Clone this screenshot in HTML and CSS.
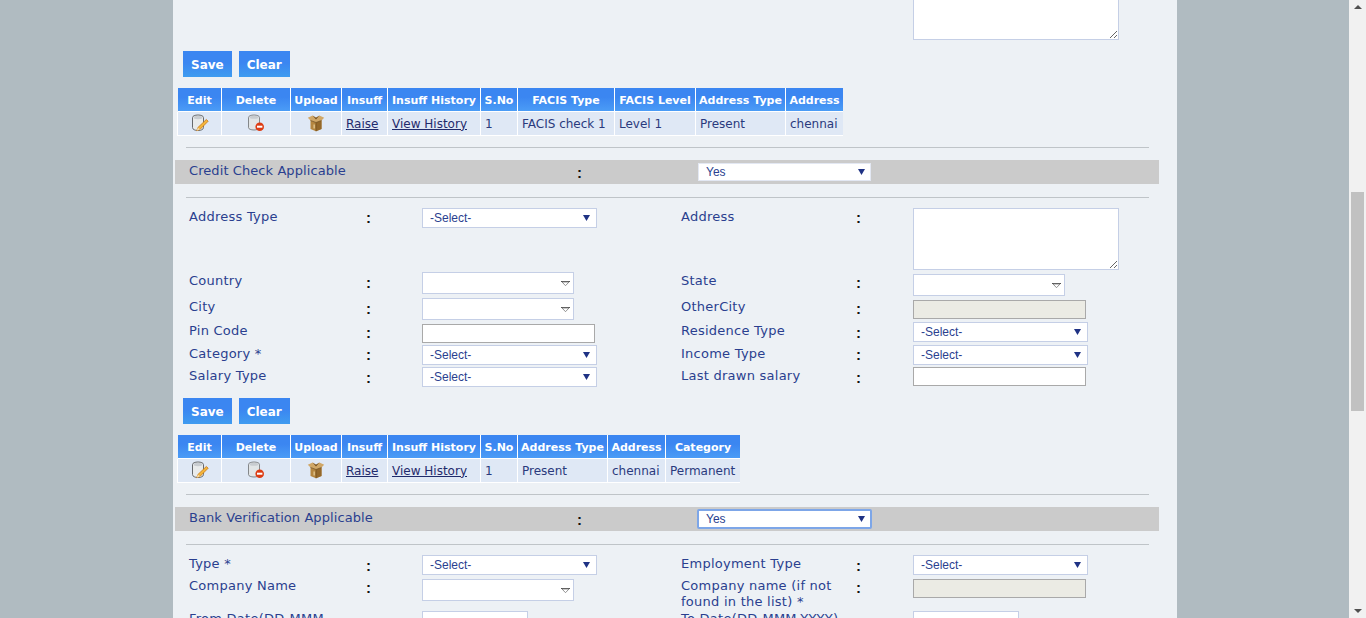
FILE: index.html
```html
<!DOCTYPE html>
<html lang="en">
<head>
<meta charset="utf-8">
<title>Verification details</title>
<link rel="stylesheet" href="styles.css">
</head>
<body>
<svg class="defs" aria-hidden="true">
  <symbol id="i-edit" viewBox="0 0 18 18">
    <path d="M1.500 3.500C1.500 2 4 1 7 1s5.500 1 5.500 2.500v10C12.500 15.500 10 16.500 7 16.500s-5.500-1-5.500-3z" fill="#e9ebeb" stroke="#66696c" stroke-width="1"/>
    <ellipse cx="7" cy="3.500" rx="4.500" ry="1.700" fill="#c8ccd0"/>
    <path d="M15.300 5.500l1.900 1.700-8.200 8.200-3.300 1.300 1.200-3.200z" fill="#f4b63a" stroke="#c9791a" stroke-width=".8"/>
    <path d="M6.900 13.500l2.100 1.900-3.300 1.300z" fill="#f1dcae"/>
  </symbol>
  <symbol id="i-delete" viewBox="0 0 18 18">
    <path d="M1.500 3.300C1.500 2 4 1 7 1s5.500 1 5.500 2.300v10.400c0 1.300-2.500 2.300-5.500 2.300s-5.500-1-5.500-2.300z" fill="#e2e5e6" stroke="#84878a" stroke-width="1"/>
    <ellipse cx="7" cy="3.300" rx="4.500" ry="1.500" fill="#c8ccd0"/>
    <circle cx="12.700" cy="12.700" r="4.300" fill="#dd3b12"/>
    <rect x="10" y="11.700" width="5.400" height="2" fill="#fff"/>
  </symbol>
  <symbol id="i-box" viewBox="0 0 18 18">
    <path d="M3.500 6.500L9 8.500l5.500-2v8.500L9 17.200 3.500 15z" fill="#b5863f"/>
    <path d="M9 8.500v8.700l5.500-2.200V6.500z" fill="#94682a"/>
    <path d="M3.500 6.500L.8 3.700 5.600 1.600 9 3.700l3.400-2.100 4.800 2.100-2.700 2.800L9 8.500z" fill="#d0a767"/>
    <path d="M5.600 1.600L9 3.700l3.400-2.100L9 5.400z" fill="#6f4c1d"/>
    <path d="M3.500 6.500L9 8.500l5.500-2M9 8.500v8.700" fill="none" stroke="#74511f" stroke-width=".8"/>
    <rect x="6.500" y="10.500" width="1.300" height="4" fill="#e3c792"/>
  </symbol>
</svg>

<div class="page">
  <main class="sheet">
    <div class="form-row clip-row">
      <textarea class="field area col-last"></textarea>
    </div>

    <div class="actions">
      <button class="btn" type="button">Save</button>
      <button class="btn" type="button">Clear</button>
    </div>

    <table class="grid">
      <thead>
        <tr>
          <th class="c-edit">Edit</th><th class="c-del">Delete</th><th class="c-up">Upload</th><th class="c-ins">Insuff</th><th class="c-hist">Insuff History</th><th class="c-sno">S.No</th><th class="c-ftype">FACIS Type</th><th class="c-flevel">FACIS Level</th><th class="c-atype">Address Type</th><th class="c-addr">Address</th>
        </tr>
      </thead>
      <tbody>
        <tr>
          <td class="icon"><svg class="ico"><use href="#i-edit"/></svg></td>
          <td class="icon"><svg class="ico"><use href="#i-delete"/></svg></td>
          <td class="icon"><svg class="ico"><use href="#i-box"/></svg></td>
          <td><a href="#">Raise</a></td>
          <td><a href="#">View History</a></td>
          <td>1</td><td>FACIS check 1</td><td>Level 1</td><td>Present</td><td>chennai</td>
        </tr>
      </tbody>
    </table>

    <hr class="rule rule-a">
    <div class="bar">
      <span class="bar-label">Credit Check Applicable</span>
      <span class="colon">:</span>
      <select class="field bar-select"><option>Yes</option></select>
    </div>
    <hr class="rule rule-b">

    <div class="form-row h64">
      <label class="lbl">Address Type</label><span class="colon">:</span>
      <select class="field sel"><option>-Select-</option></select>
      <label class="lbl">Address</label><span class="colon">:</span>
      <textarea class="field area"></textarea>
    </div>
    <div class="form-row h26">
      <label class="lbl">Country</label><span class="colon">:</span>
      <select class="field combo"></select>
      <label class="lbl">State</label><span class="colon">:</span>
      <select class="field combo nudge-down"></select>
    </div>
    <div class="form-row h26">
      <label class="lbl">City</label><span class="colon">:</span>
      <select class="field combo"></select>
      <label class="lbl">OtherCity</label><span class="colon">:</span>
      <input class="txt nudge-down" type="text" disabled>
    </div>
    <div class="form-row h21 tight">
      <label class="lbl">Pin Code</label><span class="colon">:</span>
      <input class="txt" type="text">
      <label class="lbl">Residence Type</label><span class="colon">:</span>
      <select class="field sel nudge-up"><option>-Select-</option></select>
    </div>
    <div class="form-row h22 snug">
      <label class="lbl">Category *</label><span class="colon">:</span>
      <select class="field sel"><option>-Select-</option></select>
      <label class="lbl">Income Type</label><span class="colon">:</span>
      <select class="field sel"><option>-Select-</option></select>
    </div>
    <div class="form-row h22">
      <label class="lbl">Salary Type</label><span class="colon">:</span>
      <select class="field sel"><option>-Select-</option></select>
      <label class="lbl">Last drawn salary</label><span class="colon">:</span>
      <input class="txt" type="text">
    </div>

    <div class="actions after-form">
      <button class="btn" type="button">Save</button>
      <button class="btn" type="button">Clear</button>
    </div>

    <table class="grid">
      <thead>
        <tr>
          <th class="c-edit">Edit</th><th class="c-del">Delete</th><th class="c-up">Upload</th><th class="c-ins">Insuff</th><th class="c-hist">Insuff History</th><th class="c-sno">S.No</th><th class="c-atype2">Address Type</th><th class="c-addr2">Address</th><th class="c-cat">Category</th>
        </tr>
      </thead>
      <tbody>
        <tr>
          <td class="icon"><svg class="ico"><use href="#i-edit"/></svg></td>
          <td class="icon"><svg class="ico"><use href="#i-delete"/></svg></td>
          <td class="icon"><svg class="ico"><use href="#i-box"/></svg></td>
          <td><a href="#">Raise</a></td>
          <td><a href="#">View History</a></td>
          <td>1</td><td>Present</td><td>chennai</td><td>Permanent</td>
        </tr>
      </tbody>
    </table>

    <hr class="rule rule-a">
    <div class="bar">
      <span class="bar-label">Bank Verification Applicable</span>
      <span class="colon">:</span>
      <select class="field bar-select is-focus"><option>Yes</option></select>
    </div>
    <hr class="rule rule-b">

    <div class="form-row h24">
      <label class="lbl">Type *</label><span class="colon">:</span>
      <select class="field sel"><option>-Select-</option></select>
      <label class="lbl">Employment Type</label><span class="colon">:</span>
      <select class="field sel"><option>-Select-</option></select>
    </div>
    <div class="form-row h32 tight">
      <label class="lbl">Company Name</label><span class="colon">:</span>
      <select class="field combo"></select>
      <label class="lbl">Company name (if not found in the list) *</label><span class="colon">:</span>
      <input class="txt" type="text" disabled>
    </div>
    <div class="form-row h26 flush">
      <label class="lbl">From Date(DD-MMM-YYYY)</label><span class="colon">:</span>
      <input class="field date" type="text">
      <label class="lbl">To Date(DD-MMM-YYYY)</label><span class="colon">:</span>
      <input class="field date" type="text">
    </div>
  </main>

  <div class="backdrop"></div>

  <div class="scrollbar" aria-hidden="true">
    <span class="sb-arrow sb-up"></span>
    <span class="sb-thumb"></span>
    <span class="sb-arrow sb-down"></span>
  </div>
</div>
</body>
</html>
```

FILE: styles.css
```css
* { box-sizing: border-box; }

html, body {
  margin: 0;
  height: 618px;
  overflow: hidden;
  background: #b0bbc1;
}

.defs { display: none; }

.page {
  display: flex;
  height: 618px;
  overflow: hidden;
  padding-left: 173px;
  font-family: "DejaVu Sans", Verdana, sans-serif;
}

.sheet {
  flex: none;
  width: 1004px;
  height: 618px;
  overflow: hidden;
  background: #edf1f5;
}

.backdrop { flex: 1; }

/* form rows */
.form-row {
  display: grid;
  grid-template-columns: 177px 56px 259px 175px 57px 1fr;
  padding-left: 16px;
  align-items: start;
}

.clip-row {
  height: 40px;
  grid-template-rows: 40px;
  overflow: hidden;
  align-items: end;
}

.col-last { grid-column: 6; }

.h64 { height: 64px; }
.h26 { height: 26px; }
.h21 { height: 21px; }
.h22 { height: 22px; }
.h24 { height: 24px; }
.h32 { height: 32px; }

.lbl {
  padding: 1px 10px 0 0;
  font-size: 13px;
  line-height: 15.500px;
  letter-spacing: .25px;
  color: #2a3f8f;
}

.flush .lbl { padding-top: 0; }
.tight .lbl { padding-top: 0; margin-top: -1px; }

.colon {
  margin-top: 1px;
  font-family: "Liberation Sans", Arial, sans-serif;
  font-size: 15px;
  line-height: 20px;
  font-weight: 700;
  color: #111;
}

.h64 .colon, .snug .colon, .flush .colon { margin-top: 0; }
.tight .colon { margin-top: -1px; }

.nudge-down { margin-top: 2px !important; }
.nudge-up { margin-top: -2px !important; }

.field {
  display: block;
  margin: 0;
  border: 1px solid #c5cfe6;
  border-radius: 0;
  background-color: #fff;
  outline: none;
}

select.field {
  appearance: none;
  -webkit-appearance: none;
  font-family: "Liberation Sans", Arial, sans-serif;
  font-size: 12px;
  color: #2a3f8f;
  padding: 0 0 0 7px;
  background-repeat: no-repeat;
}

.sel, .bar-select {
  background-image: url("data:image/svg+xml,%3Csvg xmlns='http://www.w3.org/2000/svg' width='7' height='6'%3E%3Cpath d='M0 0h7L3.500 6z' fill='%231f3284'/%3E%3C/svg%3E");
  background-position: right 6px center;
}

.bar-select { background-position: right 5px center; }

.sel { width: 175px; height: 20px; }

.combo {
  width: 152px;
  height: 22px;
  background-image: url("data:image/svg+xml,%3Csvg xmlns='http://www.w3.org/2000/svg' width='9' height='5'%3E%3Cpath d='M0 0h9v1H0z' fill='%23555'/%3E%3Cpath d='M1 1h7L4.500 4.700z' fill='%23fff' stroke='%23777' stroke-width='.8'/%3E%3C/svg%3E");
  background-position: right 3px center;
}

.area {
  width: 206px;
  height: 62px;
  resize: both;
}

.txt {
  display: block;
  width: 173px;
  height: 19px;
  margin: 0;
  padding: 0 2px;
  border: 1px solid #a9a9a9;
  border-radius: 0;
  background: #fff;
  outline: none;
}

.txt:disabled { background: #ebebe4; }

.date { width: 106px; height: 22px; padding: 0 2px; }

/* buttons */
.actions {
  display: flex;
  gap: 7px;
  padding-left: 10px;
  margin-top: 11px;
}

.after-form { margin-top: 9px; }

.btn {
  height: 26px;
  padding: 1px 8px 0;
  border: 0;
  border-radius: 0;
  background: linear-gradient(#3b86f1 0, #3b86f1 45%, #3f9cf0 100%);
  color: #fff;
  font-family: "DejaVu Sans", Verdana, sans-serif;
  font-size: 12px;
  font-weight: 700;
}

/* result tables */
.grid {
  margin: 11px 0 0 5px;
  border-collapse: separate;
  border-spacing: 0;
  table-layout: fixed;
  width: max-content;
}

.grid th {
  height: 24px;
  padding: 1px 0 0;
  border-right: 1px solid #fff;
  border-bottom: 1px solid #fff;
  background: linear-gradient(#3b86f1 0, #3b86f1 40%, #4b9cf6 100%);
  color: #fff;
  font-size: 11px;
  font-weight: 700;
  text-align: center;
  white-space: nowrap;
}

.grid td {
  height: 24px;
  padding: 0 0 0 4px;
  border-right: 1px solid #fff;
  border-bottom: 1px solid #fff;
  background: #dfe8f5;
  color: #2a3a7d;
  font-size: 12px;
  white-space: nowrap;
}

.grid td:first-child { box-shadow: -1px 0 0 #fff; }
.grid td:last-child, .grid th:last-child { border-right: 0; }

.grid a { color: #1f2a6b; }

.grid .icon { padding: 0; text-align: center; }

.ico { display: block; width: 18px; height: 18px; margin: 0 auto 1px; }

.c-edit { width: 44px; }
.c-del { width: 69px; }
.c-up { width: 51px; }
.c-ins { width: 46px; }
.c-hist { width: 93px; }
.c-sno { width: 37px; }
.c-ftype { width: 97px; }
.c-flevel { width: 81px; }
.c-atype { width: 90px; }
.c-addr { width: 57px; }
.c-atype2 { width: 90px; }
.c-addr2 { width: 58px; }
.c-cat { width: 74px; }

/* section bars */
.rule {
  display: block;
  width: 963px;
  height: 1px;
  margin: 0 0 0 13px;
  border: 0;
  background: #bfc4c8;
}

.rule-a { margin-top: 11px; }
.rule-b { margin-top: 13px; margin-bottom: 10px; }

.bar {
  display: grid;
  grid-template-columns: 388px 120px 175px;
  align-items: start;
  width: 984px;
  height: 24px;
  margin: 12px 0 0 2px;
  padding-left: 14px;
  background: #cbcbcb;
}

.bar-label {
  padding-top: 1px;
  font-size: 13px;
  line-height: 20px;
  letter-spacing: .08px;
  color: #2a3f8f;
}

.bar .colon { padding-top: 2px; }

select.bar-select {
  width: 173px;
  height: 18px;
  margin: 3px 0 0 1px;
  border-color: #e3e8f3;
}

select.is-focus {
  width: 175px;
  height: 20px;
  margin: 2px 0 0;
  padding-left: 7px;
  border: 2px solid #7da6e8;
  border-radius: 2px;
}

/* window scrollbar */
.scrollbar {
  flex: none;
  display: flex;
  flex-direction: column;
  align-items: center;
  width: 17px;
  height: 618px;
  background: #f1f1f1;
}

.sb-thumb {
  width: 13px;
  height: 219px;
  margin-top: 186px;
  background: #c1c1c1;
}

.sb-arrow {
  flex: none;
  width: 0;
  height: 0;
  border-left: 4px solid transparent;
  border-right: 4px solid transparent;
}

.sb-up { margin-top: 5px; border-bottom: 4px solid #505050; margin-bottom: -3px; }
.sb-down { margin-top: auto; margin-bottom: 5px; border-top: 4px solid #505050; }
```
